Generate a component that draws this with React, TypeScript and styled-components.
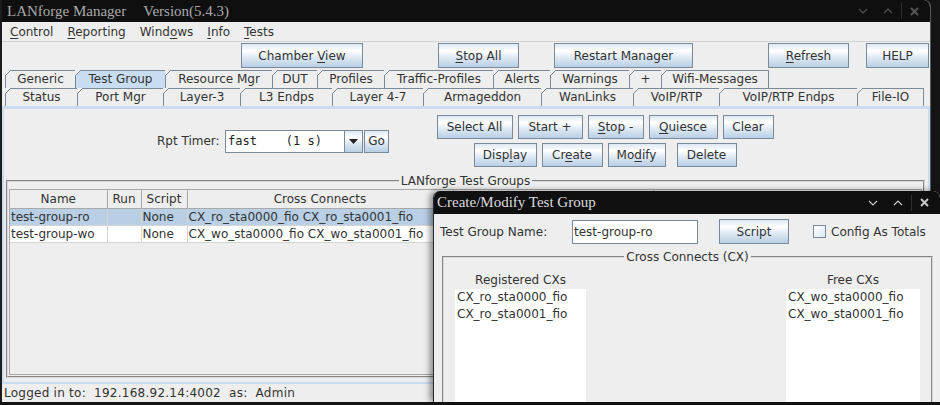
import React from 'react';
import styled, { createGlobalStyle } from 'styled-components';

const GlobalStyle = createGlobalStyle`
  html, body {
    margin: 0;
    padding: 0;
    background: #141414;
  }
  body {
    font-family: "DejaVu Sans", Verdana, sans-serif;
    font-size: 12px;
    color: #333333;
  }
  * {
    box-sizing: border-box;
  }
`;

interface TabDef {
  label: string;
  width: number;
  selected?: boolean;
}

const topTabs: TabDef[] = [
  { label: 'Generic', width: 71 },
  { label: 'Test Group', width: 91, selected: true },
  { label: 'Resource Mgr', width: 108 },
  { label: 'DUT', width: 46 },
  { label: 'Profiles', width: 68 },
  { label: 'Traffic-Profiles', width: 110 },
  { label: 'Alerts', width: 58 },
  { label: 'Warnings', width: 80 },
  { label: '+', width: 33 },
  { label: 'Wifi-Messages', width: 108 },
];

const bottomTabs: TabDef[] = [
  { label: 'Status', width: 73 },
  { label: 'Port Mgr', width: 87 },
  { label: 'Layer-3', width: 78 },
  { label: 'L3 Endps', width: 93 },
  { label: 'Layer 4-7', width: 92 },
  { label: 'Armageddon', width: 119 },
  { label: 'WanLinks', width: 93 },
  { label: 'VoIP/RTP', width: 87 },
  { label: 'VoIP/RTP Endps', width: 139 },
  { label: 'File-IO', width: 67 },
];

interface GroupRow {
  name: string;
  run: string;
  script: string;
  cx: string;
  selected?: boolean;
}

const groups: GroupRow[] = [
  { name: 'test-group-ro', run: '', script: 'None', cx: 'CX_ro_sta0000_fio CX_ro_sta0001_fio', selected: true },
  { name: 'test-group-wo', run: '', script: 'None', cx: 'CX_wo_sta0000_fio CX_wo_sta0001_fio' },
];

const registeredCx = ['CX_ro_sta0000_fio', 'CX_ro_sta0001_fio'];
const freeCx = ['CX_wo_sta0000_fio', 'CX_wo_sta0001_fio'];

// Window chrome: minimise / maximise / close glyphs at the right of a title bar
const WindowControls = ({ active }: { active?: boolean }) => {
  const c = active ? '#c8c8c8' : '#555555';
  return (
    <Controls>
      <svg width="10" height="6" viewBox="0 0 10 6">
        <polyline points="1,1 5,5 9,1" fill="none" stroke={c} strokeWidth="1.2" />
      </svg>
      <Gap $w={15} />
      <svg width="10" height="6" viewBox="0 0 10 6">
        <polyline points="1,5 5,1 9,5" fill="none" stroke={c} strokeWidth="1.2" />
      </svg>
      <Gap $w={8} />
      <Separator />
      <Gap $w={8} />
      <svg width="9" height="9" viewBox="0 0 9 9">
        <path d="M1 1 L8 8 M8 1 L1 8" stroke={c} strokeWidth="2" />
      </svg>
    </Controls>
  );
};

const Tab = ({ tab }: { tab: TabDef }) => (
  <TabItem $w={tab.width} $selected={tab.selected}>{tab.label}</TabItem>
);

export default function App() {
  return (
    <>
      <GlobalStyle />
      <Desktop>
        <MainWindow>
          <TitleBar>
            <TitleText>LANforge Manager</TitleText>
            <TitleText $gap={17}>Version(5.4.3)</TitleText>
            <WindowControls />
          </TitleBar>

          <MenuBar>
            <MenuItem><U>C</U>ontrol</MenuItem>
            <MenuItem><U>R</U>eporting</MenuItem>
            <MenuItem>Wind<U>o</U>ws</MenuItem>
            <MenuItem><U>I</U>nfo</MenuItem>
            <MenuItem><U>T</U>ests</MenuItem>
          </MenuBar>

          <ButtonBar>
            <Button $w={122} $h={25} $ml={239}>Chamber <U>V</U>iew</Button>
            <Button $w={81} $h={25} $ml={75}><U>S</U>top All</Button>
            <Button $w={139} $h={25} $ml={35}>Restart Manager</Button>
            <Button $w={81} $h={25} $ml={75}><U>R</U>efresh</Button>
            <Button $w={63} $h={25} $ml={17}>HELP</Button>
          </ButtonBar>

          <TabStrip>
            <TabRow>
              {topTabs.map((t) => <Tab key={t.label} tab={t} />)}
            </TabRow>
            <TabRow>
              {bottomTabs.map((t) => <Tab key={t.label} tab={t} />)}
            </TabRow>
          </TabStrip>

          <TabContent>
            <ControlArea>
              <RptLabel>Rpt Timer:</RptLabel>
              <Combo>
                <ComboField>fast    (1 s)</ComboField>
                <ComboArrow>
                  <svg width="9" height="5" viewBox="0 0 9 5">
                    <polygon points="0,0 9,0 4.5,5" fill="#222" />
                  </svg>
                </ComboArrow>
              </Combo>
              <Button $w={25} $h={23} $ml={1}>Go</Button>

              <ButtonStack>
                <ButtonRow>
                  <Button $w={76}>Select All</Button>
                  <Button $w={65}>Start +</Button>
                  <Button $w={56}><U>S</U>top -</Button>
                  <Button $w={69}><U>Q</U>uiesce</Button>
                  <Button $w={51}>Clear</Button>
                </ButtonRow>
                <ButtonRow>
                  <Button $w={63}>Disp<U>l</U>ay</Button>
                  <Button $w={61}>Cr<U>e</U>ate</Button>
                  <Button $w={58}>Mo<U>d</U>ify</Button>
                  <Button $w={60} $ml={6}>Delete</Button>
                </ButtonRow>
              </ButtonStack>
            </ControlArea>

            <GroupBox>
              <Legend>LANforge Test Groups</Legend>
              <ScrollArea>
                <Table>
                  <colgroup>
                    <col style={{ width: 97 }} />
                    <col style={{ width: 34 }} />
                    <col style={{ width: 46 }} />
                    <col style={{ width: 266 }} />
                    <col style={{ width: 200 }} />
                    <col />
                  </colgroup>
                  <thead>
                    <tr>
                      <Th>Name</Th>
                      <Th>Run</Th>
                      <Th>Script</Th>
                      <Th>Cross Connects</Th>
                      <Th />
                      <Th />
                    </tr>
                  </thead>
                  <tbody>
                    {groups.map((g) => (
                      <tr key={g.name}>
                        <Td $sel={g.selected}>{g.name}</Td>
                        <Td $sel={g.selected}>{g.run}</Td>
                        <Td $sel={g.selected}>{g.script}</Td>
                        <Td $sel={g.selected}>{g.cx}</Td>
                        <Td $sel={g.selected} />
                        <Td $sel={g.selected} />
                      </tr>
                    ))}
                  </tbody>
                </Table>
              </ScrollArea>
            </GroupBox>
          </TabContent>

          <StatusBar>Logged in to:  192.168.92.14:4002  as:  Admin</StatusBar>
        </MainWindow>

        <Dialog>
          <TitleBar $active>
            <TitleText>Create/Modify Test Group</TitleText>
            <WindowControls active />
          </TitleBar>
          <DialogBody>
            <NameRow>
              <NameLabel>Test Group Name:</NameLabel>
              <TextField>test-group-ro</TextField>
              <Button $w={70} $h={25} $ml={21}>Script</Button>
              <CheckBox />
              <CheckLabel>Config As Totals</CheckLabel>
            </NameRow>

            <CxBox>
              <Legend>Cross Connects (CX)</Legend>
              <CxColumns>
                <CxColumn>
                  <CxTitle>Registered CXs</CxTitle>
                  <CxList $w={131}>
                    {registeredCx.map((c) => <CxItem key={c}>{c}</CxItem>)}
                  </CxList>
                </CxColumn>
                <CxColumn>
                  <CxTitle>Free CXs</CxTitle>
                  <CxList $w={134}>
                    {freeCx.map((c) => <CxItem key={c}>{c}</CxItem>)}
                  </CxList>
                </CxColumn>
              </CxColumns>
            </CxBox>
          </DialogBody>
        </Dialog>
      </Desktop>
    </>
  );
}

const Desktop = styled.div`
  position: relative;
  width: 940px;
  height: 405px;
  overflow: hidden;
  background: #141414;
`;

const MainWindow = styled.div`
  position: absolute;
  left: 0;
  top: 0;
  width: 931px;
  height: 402px;
  background: #eeeeee;
  border-left: 2px solid #1c1c1c;
  border-right: 1px solid #5a5a5a;
  border-top-right-radius: 7px;
  overflow: hidden;

  display: flex;
  flex-direction: column;
`;

const TitleBar = styled.div<{ $active?: boolean }>`
  flex: none;
  height: ${(p) => (p.$active ? 23 : 22)}px;
  padding-left: ${(p) => (p.$active ? 3 : 5)}px;
  background: #0f0f0f;
  color: ${(p) => (p.$active ? '#dcdcdc' : '#a9a9a9')};
  font-family: "Liberation Serif", "Times New Roman", serif;
  font-size: 15px;
  white-space: nowrap;

  display: flex;
  align-items: center;
`;

const TitleText = styled.span<{ $gap?: number }>`
  margin-left: ${(p) => p.$gap || 0}px;
`;

const Controls = styled.div`
  margin-left: auto;
  padding-right: 11px;

  display: flex;
  align-items: center;
`;

const Gap = styled.span<{ $w: number }>`
  width: ${(p) => p.$w}px;
`;

const Separator = styled.span`
  width: 1px;
  height: 16px;
  background: #2e2e2e;
`;

const U = styled.span`
  text-decoration: underline;
  text-underline-offset: 2px;
`;

const MenuBar = styled.div`
  flex: none;
  height: 20px;
  padding-left: 1px;
  border-bottom: 1px solid #d2d2d2;

  display: flex;
  align-items: center;
`;

const MenuItem = styled.span`
  padding: 0 7px;
`;

const ButtonBar = styled.div`
  flex: none;
  height: 28px;
  padding-top: 1px;

  display: flex;
  align-items: flex-start;
`;

const Button = styled.button<{ $w?: number; $h?: number; $ml?: number }>`
  flex: none;
  width: ${(p) => (p.$w ? `${p.$w}px` : 'auto')};
  height: ${(p) => p.$h || 24}px;
  margin: 0 0 0 ${(p) => p.$ml || 0}px;
  padding: 0;
  border: 1px solid #7a8a99;
  border-radius: 0;
  background: linear-gradient(
    to bottom,
    #dde8f3 0%,
    #ffffff 30%,
    #dde8f3 60%,
    #b8cfe5 100%
  );
  color: #333333;
  font-family: "DejaVu Sans", Verdana, sans-serif;
  font-size: 12px;
  white-space: nowrap;
`;

const TabStrip = styled.div`
  flex: none;
  padding: 0 0 0 3px;
`;

const TabRow = styled.div`
  height: 18px;
  display: flex;
`;

const TabItem = styled.div<{ $w: number; $selected?: boolean }>`
  position: relative;
  flex: none;
  width: ${(p) => p.$w}px;
  height: 18px;
  margin-right: -1px;
  border: 1px solid #7a8a99;
  border-bottom: none;
  background: ${(p) => (p.$selected ? '#c8ddf2' : '#eeeeee')};
  text-align: center;
  line-height: 17px;
  white-space: nowrap;

  &::before {
    content: '';
    position: absolute;
    top: -1px;
    left: -1px;
    width: 6px;
    height: 6px;
    background: linear-gradient(
      135deg,
      #eeeeee 0%,
      #eeeeee 42%,
      #7a8a99 42%,
      #7a8a99 58%,
      ${(p) => (p.$selected ? '#c8ddf2' : '#eeeeee')} 58%
    );
  }
`;

const TabContent = styled.div`
  flex: 1;
  min-height: 0;
  border: 2px solid #c8ddf2;
  border-top-width: 3px;

  display: flex;
  flex-direction: column;
`;

const ControlArea = styled.div`
  flex: none;
  padding: 6px 0 7px 153px;

  display: flex;
  align-items: center;
`;

const RptLabel = styled.span`
  width: 68px;
`;

const Combo = styled.div`
  height: 23px;
  display: flex;
`;

const ComboField = styled.div`
  width: 119px;
  height: 23px;
  padding-left: 2px;
  border: 1px solid #7a8a99;
  border-right: none;
  background: #ffffff;
  color: #222;
  font-family: "DejaVu Sans Mono", "Liberation Mono", monospace;
  font-size: 12px;
  line-height: 21px;
  white-space: pre;
`;

const ComboArrow = styled.div`
  width: 19px;
  height: 23px;
  border: 1px solid #7a8a99;
  background: linear-gradient(to bottom, #dde8f3 0%, #ffffff 30%, #dde8f3 60%, #b8cfe5 100%);

  display: flex;
  align-items: center;
  justify-content: center;
`;

const ButtonStack = styled.div`
  width: 336px;
  margin-left: 48px;

  display: flex;
  flex-direction: column;
  align-items: center;
  gap: 4px;
`;

const ButtonRow = styled.div`
  display: flex;
  gap: 5px;
`;

const GroupBox = styled.fieldset`
  flex: 1;
  min-height: 0;
  margin: 0 3px 4px 2px;
  padding: 1px 1px 1px 1px;
  border: 2px groove #d9d9d9;
  min-width: 0;

  display: flex;
  flex-direction: column;
`;

const Legend = styled.legend`
  margin: 0 auto;
  padding: 0 2px;
  line-height: 14px;
  font-size: 12px;
`;

const ScrollArea = styled.div`
  flex: 1;
  overflow: hidden;
  border: 1px solid #a8a8a8;
  background: #eeeeee;
`;

const Table = styled.table`
  width: 912px;
  border-collapse: collapse;
  table-layout: fixed;
`;

const Th = styled.th`
  height: 18px;
  padding: 0;
  border: 1px solid #a9a9a9;
  border-top: none;
  background: #eeeeee;
  font-weight: normal;
  text-align: center;
  white-space: nowrap;
  overflow: hidden;

  &:first-child {
    border-left: none;
  }
`;

const Td = styled.td<{ $sel?: boolean }>`
  height: 17px;
  padding: 0 1px;
  border: 1px solid #d4d4d4;
  background: ${(p) => (p.$sel ? '#b8cfe5' : '#ffffff')};
  white-space: nowrap;
  overflow: hidden;

  &:first-child {
    border-left: none;
  }
`;

const StatusBar = styled.div`
  flex: none;
  height: 18px;
  padding-left: 2px;
  line-height: 18px;
  letter-spacing: 0.25px;
  white-space: pre;
`;

const Dialog = styled.div`
  position: absolute;
  left: 433px;
  top: 191px;
  width: 507px;
  height: 211px;
  background: #eeeeee;
  border-left: 1px solid #2a2a2a;
  border-radius: 7px 7px 0 0;
  box-shadow: -3px 0 6px rgba(0, 0, 0, 0.45);
  overflow: hidden;

  display: flex;
  flex-direction: column;
`;

const DialogBody = styled.div`
  flex: 1;
  padding: 5px 0 0 6px;

  display: flex;
  flex-direction: column;
`;

const NameRow = styled.div`
  height: 25px;
  display: flex;
  align-items: center;
`;

const NameLabel = styled.span`
  width: 132px;
`;

const TextField = styled.div`
  width: 126px;
  height: 24px;
  padding-left: 1px;
  border: 1px solid #7a8a99;
  background: #ffffff;
  line-height: 22px;
`;

const CheckBox = styled.span`
  width: 13px;
  height: 13px;
  margin-left: 24px;
  border: 1px solid #7a8a99;
  background: linear-gradient(to bottom right, #ffffff, #dde8f3);
`;

const CheckLabel = styled.span`
  margin-left: 5px;
  white-space: nowrap;
`;

const CxBox = styled.fieldset`
  height: 200px;
  flex: none;
  margin: 6px 0 0 2px;
  width: 491px;
  padding: 0 11px;
  border: 2px groove #d9d9d9;
  min-width: 0;
`;

const CxColumns = styled.div`
  display: flex;
  justify-content: space-between;
`;

const CxColumn = styled.div`
  display: flex;
  flex-direction: column;
  align-items: center;
`;

const CxTitle = styled.div`
  margin-top: 9px;
  line-height: 15px;
`;

const CxList = styled.div<{ $w: number }>`
  width: ${(p) => p.$w}px;
  height: 160px;
  margin-top: 1px;
  background: #ffffff;
`;

const CxItem = styled.div`
  height: 17px;
  padding-left: 2px;
  line-height: 17px;
`;
